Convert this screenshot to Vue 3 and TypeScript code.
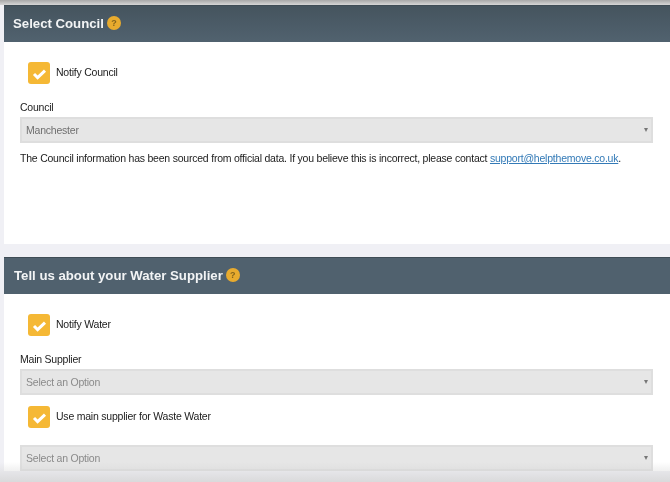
<script setup lang="ts">
interface Check { key: string; label: string }
const councilCheck: Check = { key: 'council', label: 'Notify Council' }
</script>

<template>
  <div class="page">
    <section class="panel first">
      <header class="head">
        <h2>Select Council</h2>
        <span class="help">?</span>
      </header>
      <div class="body council-body">
        <label class="check">
          <span class="box"><svg viewBox="0 0 22 22" width="22" height="22"><path d="M6 12 9.6 15.6 17 8.6" fill="none" stroke="#fff" stroke-width="3" /></svg></span>
          <span class="check-text">{{ councilCheck.label }}</span>
        </label>
        <div class="label">Council</div>
        <div class="select"><span class="value">Manchester</span><i class="caret"></i></div>
        <p class="note">The Council information has been sourced from official data. If you believe this is incorrect, please contact <a href="#">support@helpthemove.co.uk</a>.</p>
      </div>
    </section>
    <section class="panel">
      <header class="head">
        <h2>Tell us about your Water Supplier</h2>
        <span class="help">?</span>
      </header>
      <div class="body">
        <label class="check">
          <span class="box"><svg viewBox="0 0 22 22" width="22" height="22"><path d="M6 12 9.6 15.6 17 8.6" fill="none" stroke="#fff" stroke-width="3" /></svg></span>
          <span class="check-text">Notify Water</span>
        </label>
        <div class="label">Main Supplier</div>
        <div class="select"><span class="value muted">Select an Option</span><i class="caret"></i></div>
        <label class="check waste">
          <span class="box"><svg viewBox="0 0 22 22" width="22" height="22"><path d="M6 12 9.6 15.6 17 8.6" fill="none" stroke="#fff" stroke-width="3" /></svg></span>
          <span class="check-text">Use main supplier for Waste Water</span>
        </label>
        <div class="select last"><span class="value muted">Select an Option</span><i class="caret"></i></div>
      </div>
    </section>
    <div class="shade top"></div>
    <div class="shade bottom"></div>
  </div>
</template>

<style>
html, body { margin: 0; background: #f0f0f5; overflow: hidden; }
</style>

<style scoped>
.page {
  position: relative;
  width: 670px;
  height: 482px;
  overflow: hidden;
  box-sizing: border-box;
  padding: 5px 0 0 4px;
  background: #f0f0f5;
  font-family: "Liberation Sans", Arial, sans-serif;
  font-size: 10.5px;
  letter-spacing: -0.22px;
  color: #1c1c1c;
  filter: blur(0.4px);
}
.panel { background: #fff; }
.panel.first { margin-bottom: 13px; }
.head {
  height: 37px;
  display: flex;
  align-items: center;
  gap: 3px;
  padding: 0 0 2px 9px;
  background: linear-gradient(#45545e, #51626f);
  border-top: 1px solid #3f4c55;
  box-sizing: border-box;
}
.panel + .panel .head { background: #50616e; padding-left: 10px; }
h2 {
  margin: 0;
  font-size: 13.2px;
  letter-spacing: 0;
  font-weight: 700;
  color: #f2f4f5;
}
.help {
  width: 14px;
  height: 14px;
  border-radius: 50%;
  background: #e8ab2e;
  color: #85641b;
  font-size: 9px;
  letter-spacing: 0;
  font-weight: 700;
  text-align: center;
  line-height: 14px;
}
.body { padding: 20px 17px 0 16px; }
.council-body { height: 202px; box-sizing: border-box; }
.check { display: flex; align-items: center; gap: 6px; margin-left: 8px; line-height: 20px; }
.check-text { margin-bottom: 2px; }
.box {
  width: 22px;
  height: 22px;
  border-radius: 3px;
  background: #f5b835;
  display: block;
}
.box svg { display: block; }
.label { margin-top: 17px; height: 12px; line-height: 12px; }
.select {
  height: 26px;
  margin-top: 4px;
  box-sizing: border-box;
  border: 2px solid #dedede;
  background: #e6e6e6;
  display: flex;
  align-items: center;
  justify-content: space-between;
  padding: 0 3px 0 4px;
}
.value { color: #6f6f6f; }
.muted { color: #8a8a8a; }
.caret {
  width: 0;
  height: 0;
  border-left: 2.5px solid transparent;
  border-right: 2.5px solid transparent;
  border-top: 4px solid #777;
}
.note { margin: 9px 0 0; line-height: 12px; }
a { color: #337ab7; }
.waste { margin-top: 11px; }
.last { margin-top: 17px; }
.shade { position: absolute; left: 0; right: 0; pointer-events: none; }
.top { top: 0; height: 5px; background: linear-gradient(#a8a8a8, #d6d6d6); }
.bottom { bottom: 0; height: 20px; background: linear-gradient(rgba(210,210,210,0), rgba(210,210,210,.75)); }
</style>
